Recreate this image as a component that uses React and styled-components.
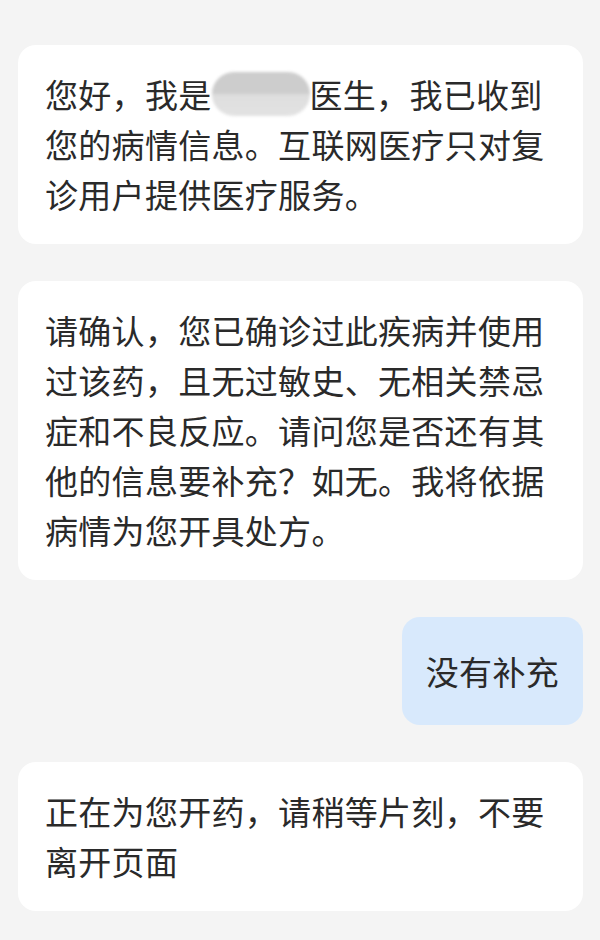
import React from 'react'
import styled, { createGlobalStyle } from 'styled-components'

const GlobalStyle = createGlobalStyle`
  html, body {
    margin: 0;
    padding: 0;
    background: #f4f4f4;
  }
  body {
    font-family: "Noto Sans CJK SC", "Noto Sans", sans-serif;
  }
`

const Page = styled.div`
  width: 600px;
  min-height: 940px;
  box-sizing: border-box;
  padding: 45px 17px 0 18px;
  display: flex;
  flex-direction: column;
  gap: 37px;
  background: #f4f4f4;
`

const Bubble = styled.div`
  align-self: ${props => props.mine ? 'flex-end' : 'stretch'};
  background: ${props => props.mine ? '#d8e9fc' : '#ffffff'};
  border-radius: 18px;
  padding: ${props => props.mine ? '29px 24px' : '24px 27px 25px'};
  color: #2a2a2a;
  font-size: 33px;
  line-height: 50px;
  letter-spacing: 0.3px;
`

const Blur = styled.span`
  display: inline-block;
  width: 98px;
  height: 44px;
  vertical-align: -8px;
  border-radius: 22px;
  background: linear-gradient(180deg, #cdcdcd 0%, #cdcdcd 48%, #dedede 52%, #e2e2e2 100%);
  filter: blur(1.5px);
`

export default function App() {
  return (
    <>
      <GlobalStyle />
      <Page>
        <Bubble>
          您好，我是<Blur />医生，我已收到<br />
          您的病情信息。互联网医疗只对复<br />
          诊用户提供医疗服务。
        </Bubble>
        <Bubble>
          请确认，您已确诊过此疾病并使用<br />
          过该药，且无过敏史、无相关禁忌<br />
          症和不良反应。请问您是否还有其<br />
          他的信息要补充？如无。我将依据<br />
          病情为您开具处方。
        </Bubble>
        <Bubble mine>没有补充</Bubble>
        <Bubble>
          正在为您开药，请稍等片刻，不要<br />
          离开页面
        </Bubble>
      </Page>
    </>
  )
}
